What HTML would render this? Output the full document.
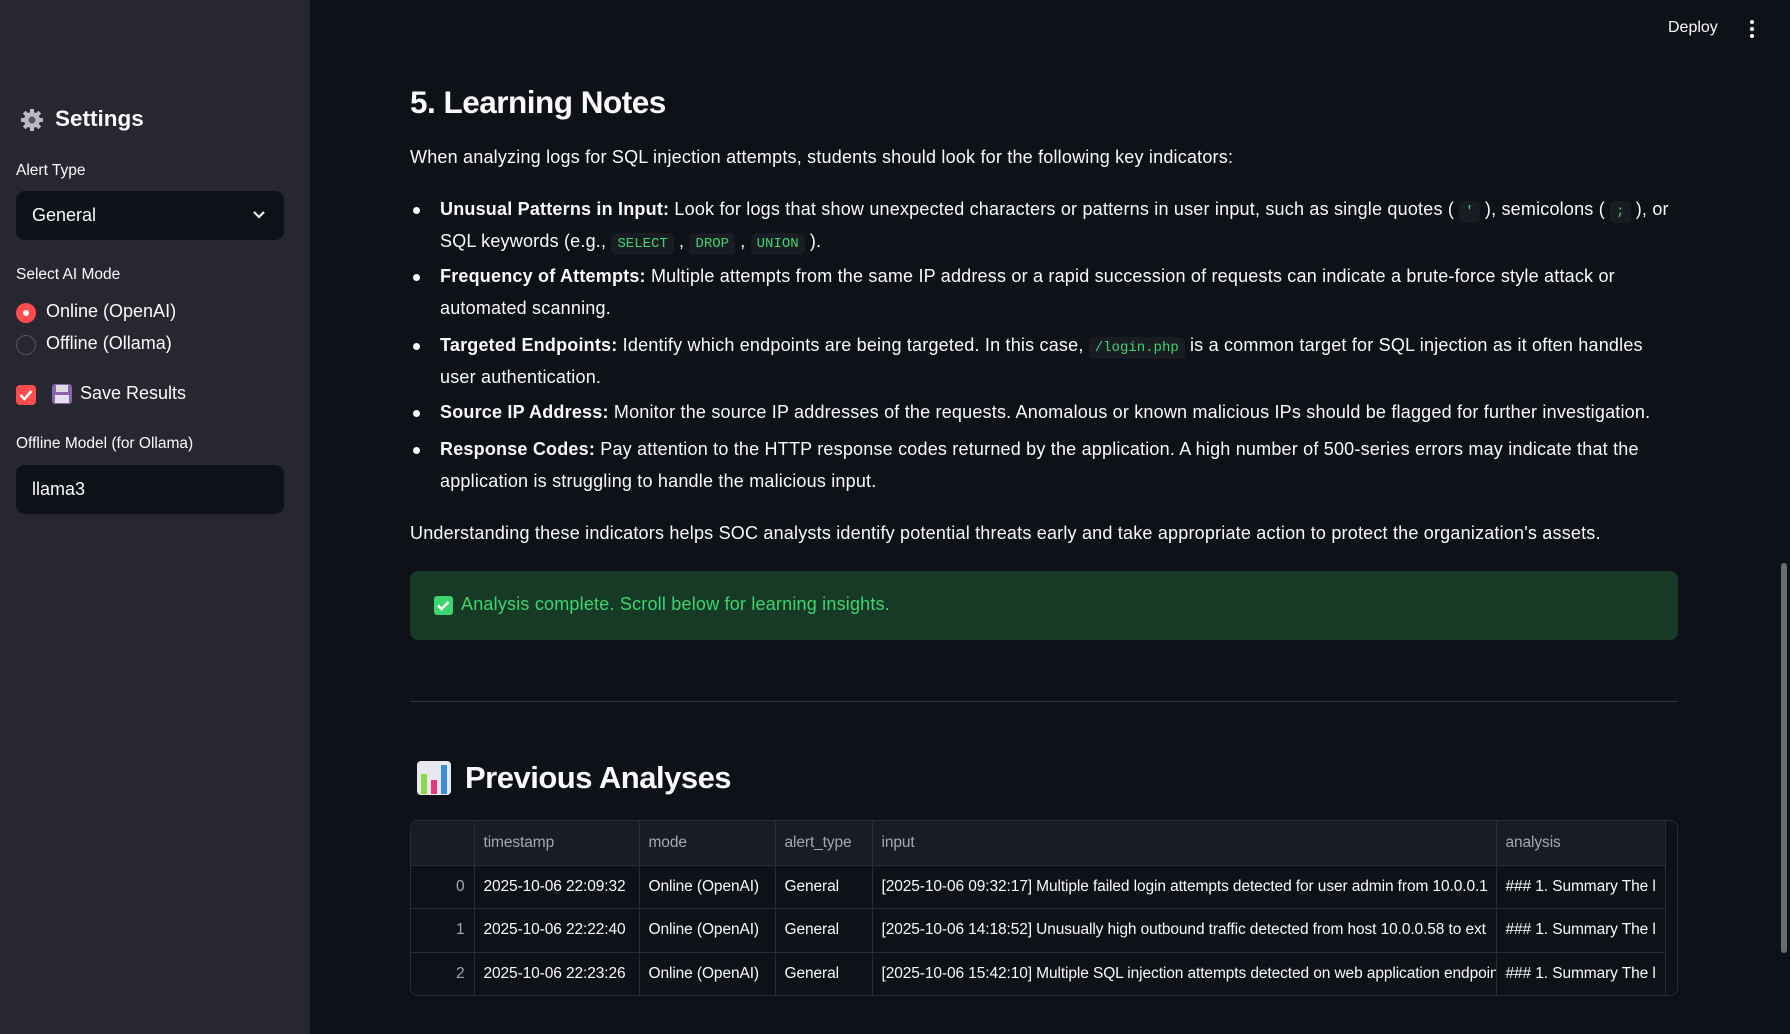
<!DOCTYPE html>
<html><head><meta charset="utf-8"><style>
*{box-sizing:border-box;margin:0;padding:0}
body{width:1790px;height:1034px;overflow:hidden;background:#0e1117;font-family:"Liberation Sans",sans-serif;color:#fafafa;position:relative}
.sb{position:absolute;left:0;top:0;width:310px;height:1034px;background:#262730}
.abs{position:absolute;white-space:nowrap}
.lbl{font-size:15.5px;color:#fafafa}
.box{position:absolute;left:16px;width:268px;height:49px;background:#0e1117;border-radius:9px;font-size:18px;padding-left:16px;line-height:49px}
.t{font-size:18px;letter-spacing:0.2px}
b{font-weight:bold}
code{font-family:"Liberation Mono",monospace;font-size:14px;color:#3dd56d;background:#1a1c24;padding:3px 6px;border-radius:5px;letter-spacing:0}
.dot{position:absolute;left:413px;width:7px;height:7px;border-radius:50%;background:#fafafa}
table{border-collapse:collapse;font-size:15.5px;letter-spacing:-0.1px}
td,th{border-right:1px solid #2a2c35;border-bottom:1px solid #2a2c35;height:43.6px;padding:0 9px;text-align:left;font-weight:normal;white-space:nowrap;overflow:hidden}
th{color:#a3a8b8;background:#1a1c24;height:44px}
</style></head><body>
<div class="sb">
 <svg class="abs" style="left:20px;top:108px" width="24" height="24" viewBox="0 0 24 24"><g fill="#b9b9c4"><circle cx="12" cy="12" r="8"/><g><rect x="10" y="1" width="4" height="5"/><rect x="10" y="18" width="4" height="5"/><rect x="1" y="10" width="5" height="4"/><rect x="18" y="10" width="5" height="4"/><rect x="10" y="1" width="4" height="5" transform="rotate(45 12 12)"/><rect x="10" y="18" width="4" height="5" transform="rotate(45 12 12)"/><rect x="1" y="10" width="5" height="4" transform="rotate(45 12 12)"/><rect x="18" y="10" width="5" height="4" transform="rotate(45 12 12)"/></g></g><circle cx="12" cy="12" r="3.5" fill="#555"/></svg>
 <div class="abs" style="left:55px;top:106px;font-size:22.5px;font-weight:bold">Settings</div>
 <div class="abs lbl" style="left:16px;top:162px">Alert Type</div>
 <div class="box" style="top:191px">General<svg style="position:absolute;right:18px;top:19px" width="14" height="10" viewBox="0 0 14 10"><path d="M2 2l5 5 5-5" stroke="#fafafa" stroke-width="2.2" fill="none"/></svg></div>
 <div class="abs lbl" style="left:16px;top:266px">Select AI Mode</div>
 <div class="abs" style="left:16px;top:303px;width:20px;height:20px;border-radius:50%;background:#ff4b4b"><div style="position:absolute;left:7px;top:7px;width:6px;height:6px;border-radius:50%;background:#fff"></div></div>
 <div class="abs" style="left:46px;top:301px;font-size:18px">Online (OpenAI)</div>
 <div class="abs" style="left:16px;top:335px;width:20px;height:20px;border-radius:50%;border:1px solid #555"></div>
 <div class="abs" style="left:46px;top:333px;font-size:18px">Offline (Ollama)</div>
 <div class="abs" style="left:16px;top:385px;width:20px;height:20px;border-radius:4px;background:#ff4b4b"><svg width="20" height="20" viewBox="0 0 20 20"><path d="M4.5 10l4 4 7-8" stroke="#fff" stroke-width="2.6" fill="none"/></svg></div>
 <div class="abs" style="left:52px;top:384px;width:20px;height:20px;border-radius:3px;background:#8a63a8"><div style="position:absolute;left:4px;top:1px;width:12px;height:7px;background:#ddd"></div><div style="position:absolute;left:3px;top:11px;width:14px;height:8px;background:#e8e0f0"></div></div>
 <div class="abs" style="left:80px;top:383px;font-size:18px">Save Results</div>
 <div class="abs lbl" style="left:16px;top:435px">Offline Model (for Ollama)</div>
 <div class="box" style="top:465px">llama3</div>
</div>
<div class="abs" style="left:1668px;top:19px;font-size:16px">Deploy</div>
<svg class="abs" style="left:1748px;top:19px" width="8" height="20"><circle cx="4" cy="3" r="2" fill="#fafafa"/><circle cx="4" cy="10" r="2" fill="#fafafa"/><circle cx="4" cy="17" r="2" fill="#fafafa"/></svg>

<div class="abs" style="left:410px;top:84px;font-size:31.5px;font-weight:bold;letter-spacing:-0.5px">5. Learning Notes</div>
<div class="abs t" style="left:410px;top:147px">When analyzing logs for SQL injection attempts, students should look for the following key indicators:</div>
<div class="dot" style="top:207px"></div>
<div class="abs t" style="left:440px;top:199px"><b>Unusual Patterns in Input:</b> Look for logs that show unexpected characters or patterns in user input, such as single quotes ( <code>'</code> ), semicolons ( <code>;</code> ), or</div>
<div class="abs t" style="left:440px;top:231px">SQL keywords (e.g., <code>SELECT</code> , <code>DROP</code> , <code>UNION</code> ).</div>
<div class="dot" style="top:274px"></div>
<div class="abs t" style="left:440px;top:266px"><b>Frequency of Attempts:</b> Multiple attempts from the same IP address or a rapid succession of requests can indicate a brute-force style attack or</div>
<div class="abs t" style="left:440px;top:298px">automated scanning.</div>
<div class="dot" style="top:343px"></div>
<div class="abs t" style="left:440px;top:335px"><b>Targeted Endpoints:</b> Identify which endpoints are being targeted. In this case, <code>/login.php</code> is a common target for SQL injection as it often handles</div>
<div class="abs t" style="left:440px;top:367px">user authentication.</div>
<div class="dot" style="top:410px"></div>
<div class="abs t" style="left:440px;top:402px"><b>Source IP Address:</b> Monitor the source IP addresses of the requests. Anomalous or known malicious IPs should be flagged for further investigation.</div>
<div class="dot" style="top:447px"></div>
<div class="abs t" style="left:440px;top:439px"><b>Response Codes:</b> Pay attention to the HTTP response codes returned by the application. A high number of 500-series errors may indicate that the</div>
<div class="abs t" style="left:440px;top:471px">application is struggling to handle the malicious input.</div>
<div class="abs t" style="left:410px;top:523px">Understanding these indicators helps SOC analysts identify potential threats early and take appropriate action to protect the organization's assets.</div>

<div class="abs" style="left:410px;top:571px;width:1268px;height:69px;background:#173a27;border-radius:8px"></div>
<div class="abs" style="left:434px;top:596px;width:19px;height:19px;border-radius:3px;background:#3dd56d"><svg width="19" height="19" viewBox="0 0 19 19"><path d="M4 9.5l3.5 3.5 7-7" stroke="#fff" stroke-width="2.4" fill="none"/></svg></div>
<div class="abs t" style="left:461px;top:594px;color:#3dd56d">Analysis complete. Scroll below for learning insights.</div>
<div class="abs" style="left:410px;top:701px;width:1268px;height:1px;background:#31333b"></div>

<svg class="abs" style="left:416px;top:760px" width="36" height="36" viewBox="0 0 36 36"><rect x="1" y="1" width="34" height="34" rx="4" fill="#e8e8ee"/><rect x="5" y="14" width="6" height="20" fill="#8bd64a"/><rect x="15" y="20" width="6" height="14" fill="#e8387a"/><rect x="25" y="5" width="6" height="29" fill="#3a8de0"/></svg>
<div class="abs" style="left:465px;top:760px;font-size:31px;font-weight:bold;letter-spacing:-0.5px">Previous Analyses</div>

<div class="abs" style="left:410px;top:820px;width:1268px;height:176px;border:1px solid #2a2c35;border-radius:8px;overflow:hidden">
<table style="width:1254px;table-layout:fixed">
<colgroup><col style="width:63px"><col style="width:165px"><col style="width:136px"><col style="width:97px"><col style="width:624px"><col style="width:169px"></colgroup>
<tr><th></th><th>timestamp</th><th>mode</th><th>alert_type</th><th>input</th><th>analysis</th></tr>
<tr><td style="text-align:right;color:#a3a8b8">0</td><td>2025-10-06 22:09:32</td><td>Online (OpenAI)</td><td>General</td><td>[2025-10-06 09:32:17] Multiple failed login attempts detected for user admin from 10.0.0.1</td><td>### 1. Summary The l</td></tr>
<tr><td style="text-align:right;color:#a3a8b8">1</td><td>2025-10-06 22:22:40</td><td>Online (OpenAI)</td><td>General</td><td>[2025-10-06 14:18:52] Unusually high outbound traffic detected from host 10.0.0.58 to ext</td><td>### 1. Summary The l</td></tr>
<tr><td style="text-align:right;color:#a3a8b8">2</td><td>2025-10-06 22:23:26</td><td>Online (OpenAI)</td><td>General</td><td>[2025-10-06 15:42:10] Multiple SQL injection attempts detected on web application endpoint</td><td>### 1. Summary The l</td></tr>
</table></div>
<div class="abs" style="left:1781px;top:563px;width:6px;height:390px;border-radius:3px;background:#6b6c72"></div>
</body></html>
